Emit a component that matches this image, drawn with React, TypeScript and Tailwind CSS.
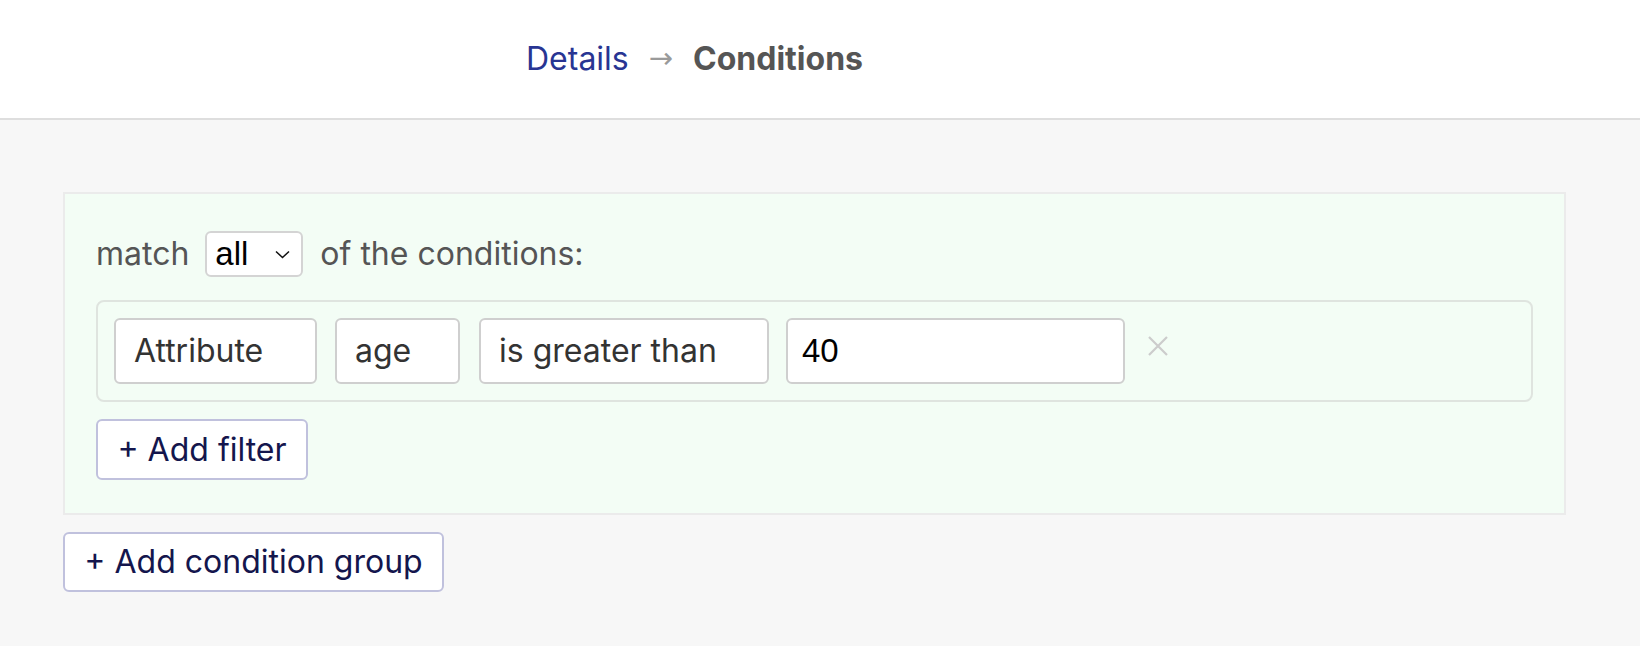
export default function App() {
  return (
    <div className="min-h-screen bg-[#f7f7f7] font-['Inter',sans-serif]">
      {/* Header / breadcrumb */}
      <div className="h-[120px] bg-white border-b-2 border-[#dedede] flex items-center pl-[526px] text-[32px]">
        <a href="#" className="text-[#283593]">Details</a>
        <span className="mx-[20px] text-[#9a9a9a] font-['DejaVu_Sans',sans-serif] text-[29px]">→</span>
        <span className="font-bold text-[#555555]">Conditions</span>
      </div>

      <div className="px-[63px] pt-[72px] pb-[40px]">
        {/* Condition group */}
        <div className="w-[1503px] border-2 border-[#ebebeb] bg-[#f3fdf5] px-[31px] pt-[37px] pb-[33px]">
          <div className="flex items-center h-[46px] text-[32px] text-[#555555]">
            <span>match</span>
            <div className="ml-[16px] mr-[17px] w-[98px] h-[46px] bg-white border-2 border-[#d4d4d4] rounded-[6px] flex items-center justify-between pl-[8px] pr-[11px]">
              <span className="font-['Liberation_Sans',sans-serif] text-[33px] text-black">all</span>
              <svg width="15" height="9" viewBox="0 0 15 9" fill="none">
                <path d="M1 1.5 7.5 7.5 14 1.5" stroke="#111" strokeWidth="1.5" />
              </svg>
            </div>
            <span>of the conditions:</span>
          </div>

          {/* Filter row */}
          <div className="mt-[23px] h-[102px] border-2 border-[#dfe4df] rounded-[8px] p-[16px] flex items-center">
            <div className="w-[203px] h-[66px] bg-white border-2 border-[#cfcfcf] rounded-[6px] flex items-center pl-[18px] text-[32px] text-[#333333]">
              Attribute
            </div>
            <div className="ml-[18px] w-[125px] h-[66px] bg-white border-2 border-[#cfcfcf] rounded-[6px] flex items-center pl-[18px] text-[32px] text-[#333333]">
              age
            </div>
            <div className="ml-[19px] w-[290px] h-[66px] bg-white border-2 border-[#cfcfcf] rounded-[6px] flex items-center pl-[18px] text-[32px] text-[#333333]">
              is greater than
            </div>
            <input
              type="text"
              defaultValue="40"
              className="ml-[17px] w-[339px] h-[66px] bg-white border-2 border-[#cfcfcf] rounded-[6px] pl-[14px] font-['Liberation_Sans',sans-serif] text-[33px] text-black outline-none"
            />
            <button className="ml-[22px] -mt-[10px] w-[22px] h-[22px] flex items-center justify-center">
              <svg width="20" height="20" viewBox="0 0 20 20" fill="none">
                <path d="M1 1 19 19M19 1 1 19" stroke="#cccccc" strokeWidth="2.2" />
              </svg>
            </button>
          </div>

          <button className="mt-[17px] h-[61px] w-[212px] bg-white border-2 border-[#c0c1dd] rounded-[6px] text-[32px] text-[#14164d]">
            + Add filter
          </button>
        </div>

        <button className="mt-[17px] h-[60px] w-[381px] bg-white border-2 border-[#c0c1dd] rounded-[6px] text-[32px] text-[#14164d]">
          + Add condition group
        </button>
      </div>
    </div>
  );
}
